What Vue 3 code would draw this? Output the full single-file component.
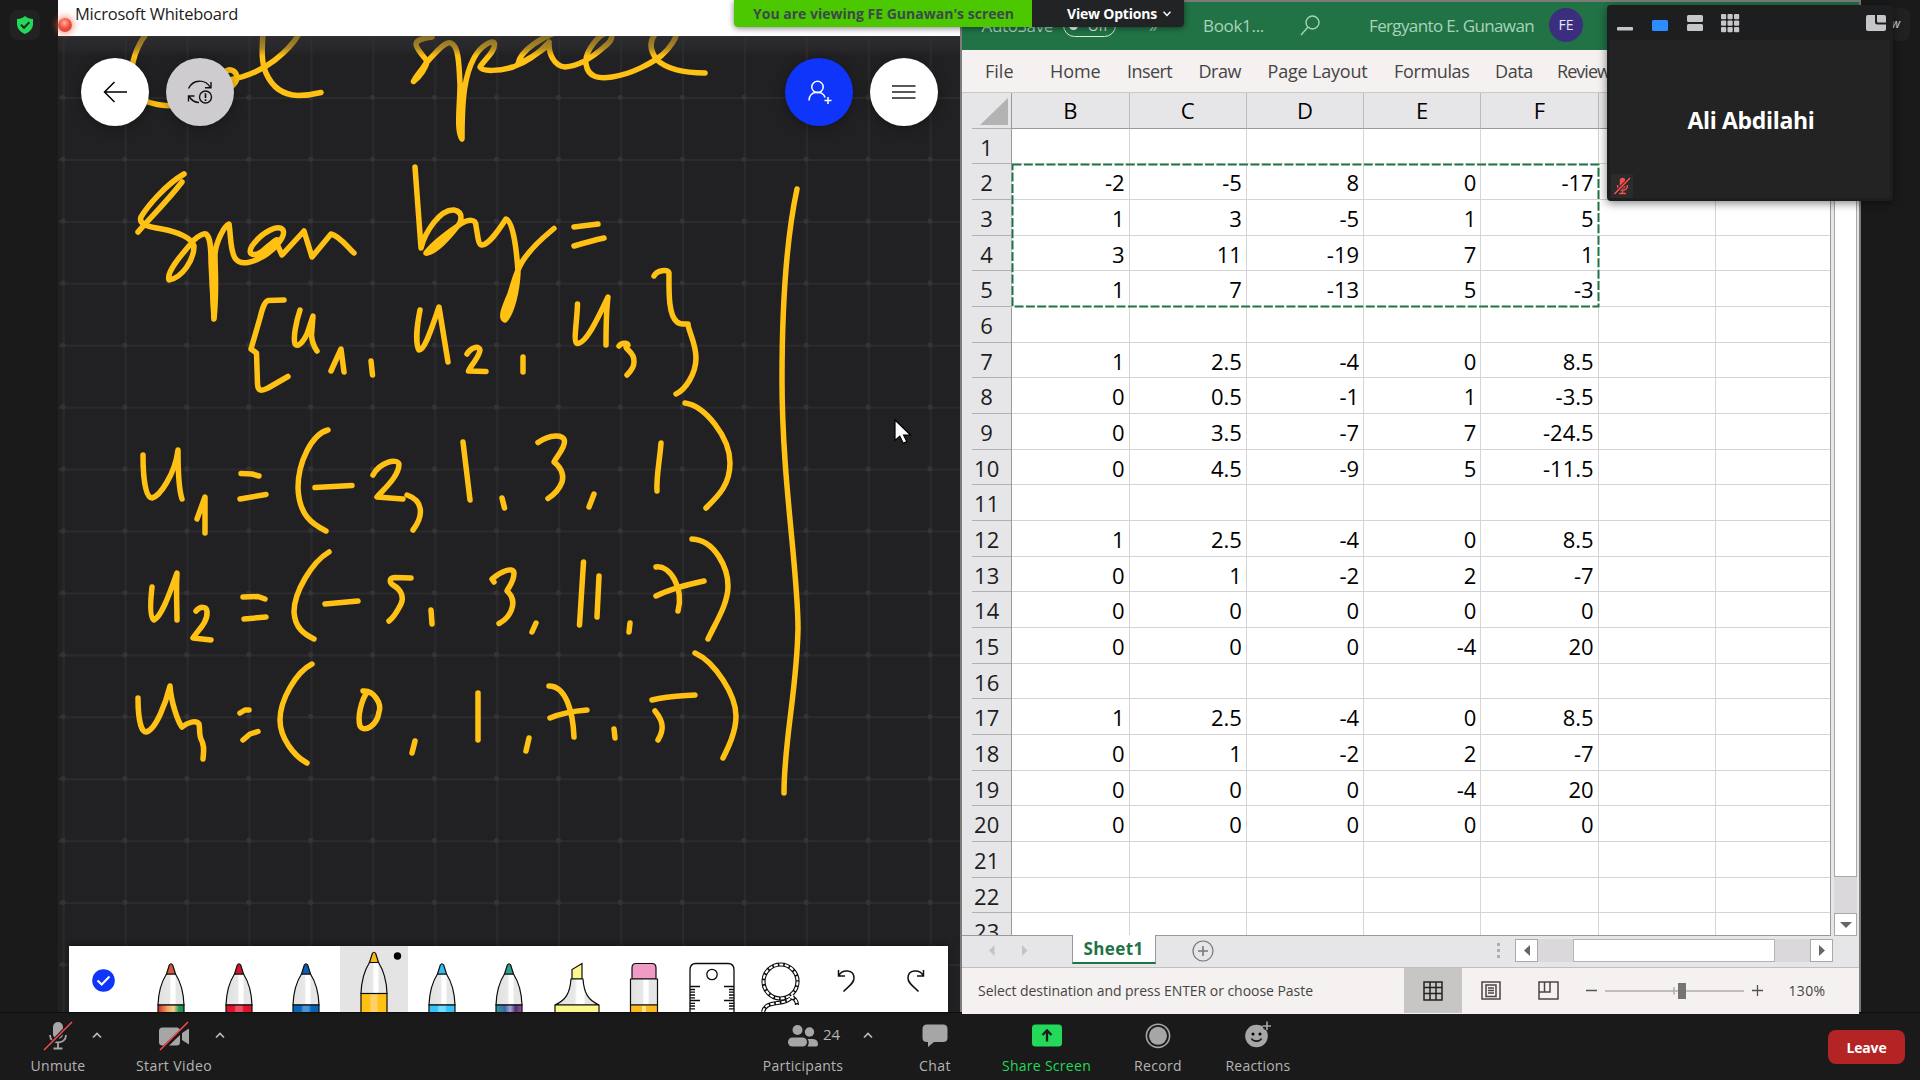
<script setup>
// Spreads the letters of a label so that its run has the given width in pixels.
const vFit = {
  mounted(el, { value }) {
    const width = el.getBoundingClientRect().width
    el.style.letterSpacing = (value - width) / el.textContent.trim().length + 'px'
  }
}

const menu = [
  ['File', 28.5], ['Home', 50.5], ['Insert', 45], ['Draw', 42.5],
  ['Page Layout', 100], ['Formulas', 75.5], ['Data', 38], ['Review', 53]
]
const columns = ['B', 'C', 'D', 'E', 'F', '', '']
const values = {
  2: [-2, -5, 8, 0, -17], 3: [1, 3, -5, 1, 5], 4: [3, 11, -19, 7, 1], 5: [1, 7, -13, 5, -3],
  7: [1, 2.5, -4, 0, 8.5], 8: [0, 0.5, -1, 1, -3.5], 9: [0, 3.5, -7, 7, -24.5], 10: [0, 4.5, -9, 5, -11.5],
  12: [1, 2.5, -4, 0, 8.5], 13: [0, 1, -2, 2, -7], 14: [0, 0, 0, 0, 0], 15: [0, 0, 0, -4, 20],
  17: [1, 2.5, -4, 0, 8.5], 18: [0, 1, -2, 2, -7], 19: [0, 0, 0, -4, 20], 20: [0, 0, 0, 0, 0]
}
const rows = Array.from({ length: 23 }, (_, i) => ({ n: i + 1, cells: columns.map((_, c) => values[i + 1]?.[c] ?? '') }))

const pens = [
  { id: 'p1', tip: '#cf5b3c', body: 'url(#rainbow)' },
  { id: 'p2', tip: '#d4142f', body: 'url(#redBody)' },
  { id: 'p3', tip: '#0f5db0', body: 'url(#blueBody)' },
  { id: 'p4', tip: '#f8b81c', body: 'url(#amberBody)', selected: true },
  { id: 'p5', tip: '#35bdf3', body: 'url(#skyBody)' },
  { id: 'p6', tip: '#2f9c8c', body: 'url(#galaxy)' }
]

const ink = [
  // heading, cut by the window title
  'M146 34C134 50 128 72 133 90C142 106 170 108 190 104C214 99 237 88 237 77C236 70 229 68 225 72',
  'M229 80C246 77 262 70 275 60C285 52 295 42 300 32',
  'M263 32C262 50 261 62 266 73C273 89 284 95 298 95.5C308 95.5 315 94 321 92.5',
  'M432 37C422 38 416 41 416 44C416 49 423 55 427 61C424 68 417 74 413.5 81.5C421 76 426 67 427 62C436 52 445 41 451 43C458 46 459 60 460 85C460 105 456 130 462 139C462 95 465 75 474 58C480 46 494 38 494.500 44C495 52 484 60 480 67C482 72 500 71 513 67C528 62 540 52 549 42',
  'M558 32C544 36 520 50 518 64C532 58 548 46 549 44C549 54 554 66 565 67C580 66 595 55 604 47C612 41 614 35 609 33C600 32 584 52 586 64C588 78 600 79 612 77C632 74 652 63 662 55C671 47 676 38 677 33',
  'M656 33C648 42 651 52 657 60C668 70 688 73 705 73',
  // Span
  'M184 174C165 185 147 207 141 217C138 225 150 227 162 229C178 232 192 238 194 246C194 260 182 278 169 280C166 272 182 254 194 240C198 236 204 233 206 234C211 238 211 250 211 262L214 319C217 290 215 270 215 254C216 242 224 226 229 224C231 236 230 250 235 258C240 266 252 263 262 257C275 250 286 236 283 230C278 224 262 232 252 246C246 256 256 258 266 248C272 243 280 236 276 242L282 255L304 231L312 257L331 234C340 236 348 248 354 253',
  'M182 182C165 204 146 222 138 232',
  'M214 262L212.500 285L214 317',
  // by =
  'M415 167L421 248C425 232 440 209 454 210C464 212 462 222 456 228C448 238 434 253 426 253C436 240 452 230 462 223C468 220 476 218 476 226C478 236 478 245 482 245C490 244 500 228 506 219C514 222 517 256 518 272C517 292 512 312 505 320C500 318 504 308 510 294C514 282 516 272 522 262C532 246 545 236 554 228.500',
  'M427 253L450 234', 'M505 317L514 288',
  'M574 227L598 224', 'M574 246C584 243 595 240 604 238',
  // [u1, u2, u3}
  'M284 300L268 300.500C264 302 262 310 260 318L251 349L256.500 353L257.500 384C258 392 262 391 268 388L288 376.500',
  'M300 310C296 322 293 338 295 344C298 348 303 342 307 334L313 316L311.500 335C312 344 315 348 317 351',
  'M331 371L341 349L344 372', 'M371 361L372.500 375',
  'M420 310C416 330 416 345 419 350C425 350 432 327 439 307L448 362',
  'M467 354C472 346 480 346 480 350C479 358 470 366 468.500 371L486 371.500', 'M523 357L523 372',
  'M577.500 304C577 322 573 342 577 343.500C586 344 598 318 608 297C606 312 606 330 606 345',
  'M619 346C621 343 627 342 628 345C621 349 635 350 634 362C634 368 630 372 627 375',
  'M654 276C657 270 668 269 669 273C669 290 668 315 677 322C681 325 685 324 688 324C688 330 696 343 696 358C696 374 685 390 676 394',
  // u1 = (-2, 1, 3, 1)
  'M143 455C143 475 145 498 152 498C160 496 175 474 178 450C178 470 179 490 182 499',
  'M197 519L205 497L205 533', 'M241 473.500L252 474L259 476', 'M240 499L266 494.500',
  'M328 430C312 434 298 462 298 488C299 515 312 524 326 531', 'M315 487.500L352 485.500',
  'M373 475C380 462 397 458 399 464C399 476 385 488 377 497L403 499',
  'M407 495C422 500 425 514 413 530', 'M463 442L470 500', 'M502 498L504.500 508',
  'M538 442.500C550 434 564 434 564.500 441C565 448 557 456 554 462C562 468 564 476 562 482C559 490 552 496 548 498.500',
  'M594 494L589 507', 'M661 443C660 458 656 478 657 491', 'M685 403C705 406 730 437 730 463C730 485 718 496 706 508',
  // u2 = (-5, 3, 11, 7)
  'M152 587C150 605 150 618 154 620C162 616 170 592 177 573C176 590 177 608 177 620',
  'M196 611C200 606 207 606 207 612C208 622 198 630 193 638L211 640',
  'M243 597L258 596.500L265 599', 'M244 619L266 617',
  'M329 552C312 562 294 592 294 612C295 628 304 634 314 639', 'M325 604L358 601',
  'M411 578L395 577.500C388 578 390 583 393 585C402 590 404 598 401 604C397 612 393 618 389 621', 'M431 610L432 624',
  'M494 582L492 579C500 572 513 566 514 573C514 582 508 588 507 591C514 597 514 604 511 611C508 618 504 621 499 623.500',
  'M536 623L532 632', 'M583.500 562L579.500 625', 'M599 576L597 617', 'M630 623L629 632',
  'M656 567C670 565 684 588 678 611', 'M656 596C670 589 690 584 704 581', 'M692 539C715 540 728 568 728 586C728 604 716 622 708 639',
  // u3 = (0, 1, 7, 5)
  'M138 698C138 718 141 732 146 732C156 730 166 702 170 686C171 702 178 722 182 727C188 722 196 720 199 724C200 728 199 735 201 739C205 746 203.500 752 203 759',
  'M240 713L245 710L249 710', 'M243 740L250 734L258 731.500',
  'M312 664C296 672 280 700 280 720C280 738 294 756 307 763',
  'M363 691C374 690 382 704 379 712C377 726 364 733 360 726C357 716 362 700 366 694',
  'M415 741L412 753', 'M478 693L478 740', 'M529 738L526 751',
  'M549 686C566 686 573 712 574 737', 'M550 718C562 713 574 711 587 710', 'M614 729L615 738',
  'M652 700C668 696 682 696 695 695', 'M655 711C664 722 664 730 658 740',
  'M695 653C715 662 736 695 736 716C736 732 728 748 723 758',
  // divider
  'M797 189C784 250 782 320 782 380C782 480 798 570 798 628C797 690 784 740 784 793'
]
</script>

<template>
  <div class="screen">
    <main class="stage">
      <aside class="rail">
        <div class="chip">
          <svg width="16" height="18" viewBox="0 0 16 18"><path d="M8 0C10 2 13 3 16 3V8C16 13 12 16.500 8 18C4 16.500 0 13 0 8V3C3 3 6 2 8 0Z" fill="#23d959" /><path d="M4 8.800L7 11.800L12.300 6.300" fill="none" stroke="#1d2b20" stroke-width="2" /></svg>
        </div>
      </aside>

      <section class="board">
        <header class="board-title"><span v-fit="163">Microsoft Whiteboard</span></header>
        <div class="canvas">
          <svg class="ink" viewBox="58 36 902 976">
            <defs>
              <pattern id="cells" x="62.700" y="35.100" width="61.930" height="61.930" patternUnits="userSpaceOnUse">
                <path d="M1 0V62M0 1H62" stroke="#2b2a2d" stroke-width="1.800" fill="none" />
              </pattern>
              <linearGradient id="shade" x1="0" x2="0" y1="0" y2="1"><stop offset="0" stop-color="#333236" stop-opacity=".6" /><stop offset=".6" stop-color="#333236" stop-opacity=".4" /><stop offset="1" stop-color="#333236" stop-opacity="0" /></linearGradient>
            </defs>
            <rect x="58" y="36" width="902" height="976" fill="url(#cells)" />
            <g fill="#343337"><template v-for="i in 15" :key="i"><circle v-for="j in 15" :key="j" :cx="63 + (i - 1) * 61.93" :cy="97.3 + (j - 1) * 61.93" r="2.600" /></template></g>
            <g fill="none" stroke="#ffc114" stroke-width="5.500" stroke-linecap="round" stroke-linejoin="round">
              <path v-for="(d, i) in ink" :key="i" :d="d" />
            </g>
            <rect x="58" y="36" width="902" height="20" fill="url(#shade)" />
            <path d="M895 420V440.500L899.800 436.300L903.200 443.300L906.800 441.600L903.600 435H910.500Z" fill="#fff" stroke="#000" stroke-width="1.200" />
          </svg>
          <nav class="board-actions">
            <button class="round"><svg width="24" height="22" viewBox="0 0 24 22"><path d="M24 11H2M11.500 1L1.500 11L11.500 21" fill="none" stroke="#000" stroke-width="1.500" /></svg></button>
            <button class="round grey">
              <svg width="26" height="26" viewBox="0 0 26 26" fill="none" stroke="#111" stroke-width="1.400"><path d="M1.500 9.500C6 0 18 0 23 8M24 3V8.700H18M1.500 22.500V17H7.500M2 17.500C5 22 8 23.500 12 23.500" /><circle cx="18.500" cy="18" r="6" /><path d="M18.500 14.300V19M18.500 20.300V22" stroke-width="1.700" /></svg>
            </button>
            <span class="spring"></span>
            <button class="round blue">
              <svg width="26" height="26" viewBox="0 0 26 26" fill="none" stroke="#fff" stroke-width="1.500"><circle cx="11.500" cy="8" r="5.700" /><path d="M3 21.500C3 11 17.500 11 19 18.500M22 18V25M18.500 21.500H25.500" /></svg>
            </button>
            <button class="round"><svg width="24" height="16" viewBox="0 0 24 16"><path d="M0 2H23.500M0 8H23.500M0 14H23.500" stroke="#222" stroke-width="1.500" /></svg></button>
          </nav>
          <div class="tools">
            <div class="tool done"><svg width="23" height="23" viewBox="0 0 23 23"><circle cx="11.500" cy="11.500" r="11.300" fill="#0f35fb" /><path d="M5.500 11.500L9.700 15.500L17.500 7.500" fill="none" stroke="#fff" stroke-width="2" /></svg></div>
            <div v-for="p in pens" :key="p.id" class="tool" :class="{ selected: p.selected }">
              <svg width="67.600" height="66" viewBox="0 0 67.600 66">
                <defs>
                  <linearGradient id="barrel"><stop offset=".1" stop-color="#e2e2e3" /><stop offset=".45" stop-color="#e8e8e9" /><stop offset=".5" stop-color="#fff" /><stop offset=".65" stop-color="#fff" /><stop offset=".7" stop-color="#e6e6e7" /></linearGradient>
                  <linearGradient id="rainbow"><stop offset="0" stop-color="#c92c2c" /><stop offset=".35" stop-color="#f0a060" /><stop offset=".6" stop-color="#f5d08a" /><stop offset=".8" stop-color="#2a9a58" /><stop offset="1" stop-color="#0f8f66" /></linearGradient>
                  <linearGradient id="redBody"><stop offset=".3" stop-color="#e0122e" /><stop offset=".4" stop-color="#ea5060" /><stop offset=".6" stop-color="#ea5060" /><stop offset=".7" stop-color="#e0122e" /></linearGradient>
                  <linearGradient id="blueBody"><stop offset=".3" stop-color="#0765b8" /><stop offset=".4" stop-color="#4a93d4" /><stop offset=".6" stop-color="#4a93d4" /><stop offset=".7" stop-color="#0765b8" /></linearGradient>
                  <linearGradient id="amberBody"><stop offset=".34" stop-color="#ffc114" /><stop offset=".38" stop-color="#ffd068" /><stop offset=".62" stop-color="#ffd068" /><stop offset=".66" stop-color="#ffc114" /></linearGradient>
                  <linearGradient id="skyBody"><stop offset=".3" stop-color="#33c5fa" /><stop offset=".4" stop-color="#76dbfd" /><stop offset=".6" stop-color="#76dbfd" /><stop offset=".7" stop-color="#33c5fa" /></linearGradient>
                  <linearGradient id="galaxy"><stop offset="0" stop-color="#2a9d9c" /><stop offset=".35" stop-color="#3d6aa5" /><stop offset=".55" stop-color="#a9a4d8" /><stop offset=".75" stop-color="#4b3170" /><stop offset="1" stop-color="#a04a9c" /></linearGradient>
                </defs>
                <g :transform="p.selected ? 'translate(0 -11.500)' : null" stroke="#0c0c0c" stroke-width="1.200">
                  <path d="M29.500 28H38.500C43 35 46.500 44 47 59H21C21.500 44 25 35 29.500 28Z" fill="url(#barrel)" />
                  <path d="M29.500 28L32.300 19Q34 16.500 35.700 19L38.500 28Z" :fill="p.tip" />
                  <rect x="21" y="59" width="26" height="24" :fill="p.body" />
                </g>
                <circle v-if="p.selected" cx="57.500" cy="10" r="3.700" />
              </svg>
            </div>
            <div class="tool">
              <svg width="67.600" height="66" viewBox="0 0 67.600 66" stroke="#0c0c0c" stroke-width="1.200"><path d="M29 33V23.500L39 17.500V33Z" fill="#fbf98e" /><path d="M28 33H40C41 47 45 54 56 59H12C23 54 27 47 28 33Z" fill="url(#barrel)" /><path d="M12 59H56V70H12Z" fill="#fbf98e" /></svg>
            </div>
            <div class="tool">
              <svg width="67.600" height="66" viewBox="0 0 67.600 66" stroke="#0c0c0c" stroke-width="1.200"><path d="M22 33V22Q22 17.500 26 17.500H42Q46 17.500 46 22V33Z" fill="#f09bc4" /><path d="M20.500 33H47.500V59H20.500Z" fill="url(#barrel)" /><path d="M20.500 59H47.500V70H20.500Z" fill="#fbb91e" /><path d="M32 60H36V66H32Z" fill="#fde98a" stroke="none" /></svg>
            </div>
            <div class="tool">
              <svg width="67.600" height="66" viewBox="0 0 67.600 66" fill="#fff" stroke="#0c0c0c" stroke-width="1.300"><path d="M12 70V24Q12 17.500 18 17.500H50Q56 17.500 56 24V70Z" /><circle cx="34" cy="28.500" r="5.200" /><path d="M12 40.500H22M12 43.500H17M12 46.200H17M12 49H17M12 51.800H17M12 54.500H22M12 57.300H17M12 60H17M12 62.800H17M56 40.500H46M56 43.500H51M56 46.200H51M56 49H51M56 51.800H51M56 54.500H46M56 57.300H51M56 60H51M56 62.800H51" /></svg>
            </div>
            <div class="tool">
              <svg width="67.600" height="66" viewBox="0 0 67.600 66" fill="none"><g stroke="#0c0c0c" stroke-width="4.200"><circle cx="34.500" cy="35.500" r="17" /><path d="M44 51C49 52 51 55 51 59M17 66C20 52 40 62 47 49" /></g><g stroke="#fff" stroke-width="2" stroke-dasharray="4 1.600"><circle cx="34.500" cy="35.500" r="17" /><path d="M44 51C49 52 51 55 51 59M17 66C20 52 40 62 47 49" /></g></svg>
            </div>
            <div class="tool arrow"><svg width="20" height="23" viewBox="0 0 20 23"><path d="M1.500 1V7H8M2 6.500C5 0 17 0 17 9C17 14 13 16 6.500 22.500" fill="none" stroke="#111" stroke-width="1.500" /></svg></div>
            <div class="tool arrow"><svg class="flip" width="20" height="23" viewBox="0 0 20 23"><path d="M1.500 1V7H8M2 6.500C5 0 17 0 17 9C17 14 13 16 6.500 22.500" fill="none" stroke="#111" stroke-width="1.500" /></svg></div>
          </div>
        </div>
      </section>

      <section class="excel">
        <header class="xl-title">
          <span class="autosave" v-fit="71.500">AutoSave</span>
          <span class="toggle"><i></i><b>Off</b></span>
          <span class="more">»</span>
          <span class="book" v-fit="61">Book1...</span>
          <svg width="20" height="21" viewBox="0 0 20 21" fill="none" stroke="#a8d3ba" stroke-width="1.400"><circle cx="12.500" cy="7.500" r="6.500" /><path d="M8 12L1 20" /></svg>
          <span class="user" v-fit="165">Fergyanto E. Gunawan</span>
          <span class="avatar">FE</span>
        </header>
        <nav class="xl-menu"><span v-for="m in menu" :key="m[0]" v-fit="m[1]">{{ m[0] }}</span></nav>
        <div class="xl-body">
          <div class="sheet">
            <div class="row head">
              <div class="num corner"><svg width="29" height="28" viewBox="0 0 29 28"><path d="M28 0V27H0Z" fill="#b3b3b3" /></svg></div>
              <div v-for="(c, i) in columns" :key="i" class="cell">{{ c }}</div>
            </div>
            <div v-for="r in rows" :key="r.n" class="row">
              <div class="num">{{ r.n }}</div>
              <div v-for="(v, i) in r.cells" :key="i" class="cell">{{ v }}</div>
            </div>
            <svg class="marquee" width="590" height="146" viewBox="0 0 590 146"><rect x="1.500" y="1.500" width="586" height="142" fill="none" stroke="#fff" stroke-width="2" /><rect x="1.500" y="1.500" width="586" height="142" fill="none" stroke="#217346" stroke-width="2" stroke-dasharray="9 2.330" /></svg>
          </div>
          <div class="vscroll">
            <div class="vthumb"></div>
            <div class="vtrack"></div>
            <div class="sbtn"><svg width="12" height="6"><path d="M0 0H12L6 6Z" fill="#666" /></svg></div>
          </div>
        </div>
        <div class="xl-tabs">
          <svg class="steps" width="39" height="12" viewBox="0 0 39 12" fill="#c4c4c6"><path d="M5.500 0V11L0 5.500ZM33 0V11L38.500 5.500Z" /></svg>
          <div class="tab"><span v-fit="60">Sheet1</span></div>
          <svg class="add" width="22" height="22" viewBox="0 0 22 22" fill="none" stroke="#777"><circle cx="11" cy="11" r="10" stroke-width="1.200" /><path d="M6 11H16M11 6V16" stroke-width="1.600" /></svg>
          <span class="spring"></span>
          <svg class="dots" width="3" height="16" fill="#adadad"><path d="M0 0H3V3H0ZM0 6H3V9H0ZM0 12H3V15H0Z" /></svg>
          <div class="hscroll">
            <div class="sbtn"><svg width="6" height="11"><path d="M6 0V11L0 5.500Z" fill="#666" /></svg></div>
            <div class="htrack"><div class="hthumb"></div></div>
            <div class="sbtn"><svg width="6" height="11"><path d="M0 0V11L6 5.500Z" fill="#666" /></svg></div>
          </div>
        </div>
        <footer class="xl-status">
          <span class="msg" v-fit="335">Select destination and press ENTER or choose Paste</span>
          <span class="spring"></span>
          <div class="view on"><svg width="20" height="20" viewBox="0 0 20 20"><path d="M1 1H19V19H1ZM1 6.500H19M1 12.500H19M7 1V19M13 1V19" fill="none" stroke="#222" stroke-width="1.500" /></svg></div>
          <div class="view"><svg width="20" height="19" viewBox="0 0 20 19" fill="none" stroke="#484644" stroke-width="1.500"><path d="M1 1H19V18H1ZM5 4H15V15.500H5ZM7 7H13M7 9.500H13M7 12H13" /></svg></div>
          <div class="view"><svg width="21" height="19" viewBox="0 0 21 19" fill="none" stroke="#484644" stroke-width="1.500"><path d="M1 1H20V18H1ZM1 11H12V1M6.500 1V11" /></svg></div>
          <svg class="slider" width="178" height="20" viewBox="0 0 178 20"><path d="M1 9.500H12M167 9.500H178M172.500 4V15" stroke="#555" stroke-width="1.300" /><path d="M20 10H159M89 6V13.500" stroke="#b0aeac" stroke-width="1.500" /><rect x="93" y="2" width="8" height="16" fill="#767472" /></svg>
          <span class="pct" v-fit="37">130%</span>
        </footer>
      </section>

      <div class="record-dot"></div>
      <div class="banner">
        <div class="viewing"><span v-fit="261">You are viewing FE Gunawan's screen</span></div>
        <div class="options"><span v-fit="90">View Options</span><svg width="8" height="6"><path d="M.5 .8L4 4.500L7.500 .8" fill="none" stroke="#fff" stroke-width="1.500" /></svg></div>
      </div>
      <div class="view-chip">w</div>
      <div class="thumb">
        <svg class="thumb-bar" width="285" height="35" viewBox="0 0 285 35" fill="#c6c6c8">
          <rect x="10" y="22" width="16" height="3.500" rx="1" /><rect x="45" y="15" width="16" height="11" rx="1.500" fill="#2d8cff" />
          <rect x="80" y="10" width="16" height="7" rx="1.500" /><rect x="80" y="19" width="16" height="7" rx="1.500" />
          <template v-for="r in 3" :key="r"><rect v-for="c in 3" :key="c" :x="107.500 + c * 6.500" :y="2.500 + r * 6.500" width="5.200" height="5.200" rx="1" /></template>
          <path d="M260 10H268V17Q268 19.500 270.500 19.500H279V24Q279 26 277 26H261Q259 26 259 24V12Q259 10 261 10ZM270 10H277Q279 10 279 12V17.500H271Q270 17.500 270 16Z" />
        </svg>
        <div class="tile"><span v-fit="127">Ali Abdilahi</span>
          <div class="muted"><svg width="17" height="18" viewBox="0 0 17 18" fill="none" stroke="#f5504e"><path d="M8.500 3.500V9" stroke-width="5.500" stroke-linecap="round" /><path d="M3.500 8C3.500 15 13.500 15 13.500 8M8.500 13V16M5 16.500H12" stroke-width="1.500" /><path d="M.5 17L16 1" stroke="#2b2526" stroke-width="3.500" /><path d="M.5 17L16 1" stroke-width="1.600" /></svg></div>
        </div>
      </div>
    </main>

    <footer class="zoombar">
      <div class="item unmute">
        <svg class="icon" width="30" height="30" viewBox="0 0 30 30" fill="none" stroke="#a6a6a6"><path d="M15 6V13" stroke-width="10" stroke-linecap="round" /><path d="M7 14C7 24 23 24 23 14M15 21V27M10.500 27.500H19.500" stroke-width="1.800" /><path d="M2 29L29 1" stroke="#1a1a1a" stroke-width="4" /><path d="M1 29L29 1" stroke="#ff4b4b" stroke-width="1.500" /></svg>
        <label v-fit="55">Unmute</label>
      </div>
      <svg class="caret c1" width="10" height="7"><path d="M1 5.500L5 1.500L9 5.500" fill="none" stroke="#bbb" stroke-width="1.700" /></svg>
      <div class="item video">
        <svg class="icon" width="30" height="30" viewBox="0 0 30 30"><rect x="0" y="6.500" width="21" height="18" rx="3.500" fill="#a6a6a6" /><path d="M23 12L30 7.500V23.500L23 19Z" fill="#a6a6a6" /><path d="M1 30.500L30 2.500" stroke="#1a1a1a" stroke-width="4" /><path d="M1 29L29 1" stroke="#ff4b4b" stroke-width="1.500" /></svg>
        <label v-fit="76">Start Video</label>
      </div>
      <svg class="caret c2" width="10" height="7"><path d="M1 5.500L5 1.500L9 5.500" fill="none" stroke="#bbb" stroke-width="1.700" /></svg>
      <div class="item people">
        <svg class="icon" width="30" height="30" viewBox="0 0 30 30" fill="#a6a6a6"><circle cx="9.500" cy="9" r="5" /><circle cx="21.500" cy="11" r="4.700" /><rect x="0" y="16.500" width="19" height="9" rx="4.500" /><path d="M19.500 18H25Q30 18.500 30 23Q30 25.500 28 25.500H19.500Q22 21 19.500 18Z" /></svg>
        <label v-fit="80.500">Participants</label>
        <span class="count">24</span>
      </div>
      <svg class="caret c3" width="10" height="7"><path d="M1 5.500L5 1.500L9 5.500" fill="none" stroke="#bbb" stroke-width="1.700" /></svg>
      <div class="item chat">
        <svg class="icon" width="26" height="30" viewBox="0 0 26 30" fill="#a6a6a6"><path d="M5 3.500H21Q25.500 3.500 25.500 8V17Q25.500 21 21 21H12L6 26V21H5Q.5 21 .5 17V8Q.5 3.500 5 3.500Z" /></svg>
        <label v-fit="32">Chat</label>
      </div>
      <div class="item share">
        <svg class="icon" width="30" height="30" viewBox="0 0 30 30"><rect x="0" y="3.500" width="30" height="22" rx="3.500" fill="#23d959" /><path d="M15 20.500V10M10.500 14L15 9.500L19.500 14" fill="none" stroke="#1a1a1a" stroke-width="2.300" /></svg>
        <label v-fit="89">Share Screen</label>
      </div>
      <div class="item rec">
        <svg class="icon" width="26" height="30" viewBox="0 0 26 30"><circle cx="13" cy="14.800" r="11.600" fill="none" stroke="#a6a6a6" stroke-width="1.600" /><circle cx="13" cy="14.800" r="9" fill="#a6a6a6" /></svg>
        <label v-fit="48">Record</label>
      </div>
      <div class="item react">
        <svg class="icon" width="26" height="30" viewBox="0 0 26 30"><circle cx="11.500" cy="15" r="11.300" fill="#a6a6a6" /><path d="M22 1V9M18 5H26" stroke="#1a1a1a" stroke-width="5" /><path d="M22 .5V9M17.500 5H26.500" stroke="#a6a6a6" stroke-width="1.600" /><circle cx="8" cy="13" r="1.500" /><circle cx="15" cy="13" r="1.500" /><path d="M6.500 17.500C8 21 15 21 16.500 17.500" fill="none" stroke="#1a1a1a" stroke-width="1.700" /></svg>
        <label v-fit="65">Reactions</label>
      </div>
      <span class="spring"></span>
      <button class="leave"><span v-fit="40">Leave</span></button>
    </footer>
  </div>
</template>

<style>
body { margin: 0; background: #1a1a1a; overflow: hidden; }
</style>

<style scoped>
.screen { width: 1920px; height: 1080px; display: flex; flex-direction: column; background: #1a1a1a; font-family: "Open Sans", "Noto Sans", sans-serif; overflow: hidden; }
.screen *, .screen *::before { box-sizing: border-box; }
svg { display: block; flex: none; }
span { white-space: nowrap; }
button { border: 0; padding: 0; font: inherit; }
.spring { flex: 1; }
.stage { position: relative; height: 1012px; display: flex; flex: none; }
.rail { width: 58px; padding: 10px; }
.chip { width: 30px; height: 30px; border-radius: 8px; background: #222; display: flex; align-items: center; justify-content: center; }

.board { width: 902px; height: 1012px; }
.board-title { height: 36px; background: #fff; padding-left: 17px; font: 16.500px/28px "Open Sans", sans-serif; color: #1c1c1c; }
.board-title span { display: inline-block; }
.canvas { position: relative; height: 976px; background: #212023; display: flex; flex-direction: column; justify-content: space-between; }
.ink { position: absolute; inset: 0; width: 902px; height: 976px; }
.board-actions { position: relative; display: flex; gap: 17px; padding: 22px 22.500px 0 22.500px; }
.round { width: 68px; height: 68px; border-radius: 50%; background: #fff; display: flex; align-items: center; justify-content: center; box-shadow: 0 2px 12px rgba(0, 0, 0, .35); }
.grey { background: #cfccd0; }
.blue { background: #0f35fb; }
.tools { position: relative; display: flex; width: 879px; height: 66px; margin-left: 11px; padding-left: .7px; background: #fff; overflow: hidden; box-shadow: 0 -2px 6px rgba(0, 0, 0, .3); }
.tool { width: 67.600px; flex: none; display: flex; justify-content: center; }
.selected { background: #e5e4e4; }
.done { padding-top: 23px; }
.arrow { padding-top: 23px; }
.flip { transform: scaleX(-1); }

.excel { width: 901px; height: 1012px; background: #e6e6e8; border: 2px solid #7c7c7c; border-bottom: 0; display: flex; flex-direction: column; }
.xl-title { height: 48px; flex: none; background: #217346; display: flex; align-items: center; font-size: 17px; color: #a8d3ba; padding: 0 0 2px 19.500px; }
.toggle { width: 53px; height: 23px; margin: 0 0 0 10px; border: 1.500px solid #d5eadd; border-radius: 12px; display: flex; align-items: center; justify-content: space-between; padding: 0 7px 0 5px; }
.toggle i { width: 9px; height: 9px; border-radius: 50%; background: #fff; }
.toggle b { font-weight: 400; font-size: 14px; color: #d5eadd; }
.more { width: 14px; margin-left: 33px; }
.book { margin-left: 40px; }
.xl-title svg { margin-left: 36px; }
.user { margin-left: 49px; }
.avatar { width: 34px; height: 34px; margin-left: 15px; border-radius: 50%; background: #3b2e7e; color: #e8e8f4; font-size: 14px; line-height: 34px; text-align: center; }
.xl-menu { height: 43px; flex: none; background: #f5f1f0; border-bottom: 1px solid #cbc9c8; display: flex; gap: 26.500px; padding-left: 23px; font-size: 18px; line-height: 43px; color: #444; }
.xl-menu span { flex: none; }
.xl-menu span:first-child { margin-right: 10px; }
.xl-menu span:nth-child(7) { margin-left: -1px; }
.xl-menu span:last-child { margin-left: -2.500px; }

.xl-body { height: 843px; flex: none; display: flex; overflow: hidden; }
.sheet { position: relative; width: 869px; height: 843px; flex: none; overflow: hidden; border-right: 1px solid #999; border-bottom: 1px solid #999; }
.row { display: flex; height: 35.670px; width: 1000px; font-size: 22px; line-height: 35px; color: #000; }
.num { width: 50.300px; flex: none; text-align: center; border-right: 1px solid #9a9a9c; background: linear-gradient(#b1b1b3, #b1b1b3) 10px 100% / 40px 1px no-repeat; padding-top: 1px; color: #1d1d1d; }
.cell { width: 117.270px; flex: none; text-align: right; padding: 1px 4px 0 0; background: #fff; border-right: 1px solid #d6d6d8; border-bottom: 1px solid #d4d4d6; }
.cell:last-child { width: 140px; }
.head { height: 35.800px; line-height: 35px; }
.head .cell { background: #e6e6e8; text-align: center; padding: 0; border-right-color: #bcbcbe; border-bottom-color: #999; }
.corner { padding: 5px 0 0 18px; }
.marquee { position: absolute; left: 49px; top: 69.500px; }
.vscroll { width: 26px; padding-left: 3px; display: flex; flex-direction: column; }
.vthumb { height: 784px; width: 23px; background: #fff; border: 1px solid #a9a9ab; }
.vtrack { flex: 1; width: 23px; background: #dad8db; }
.sbtn { width: 23px; height: 23px; flex: none; background: #fff; border: 1px solid #a9a9ab; display: flex; align-items: center; justify-content: center; }

.xl-tabs { height: 32px; flex: none; display: flex; border-bottom: 1px solid #c0bebe; padding: 0 26px 0 27px; }
.steps { margin-top: 9px; }
.tab { width: 84px; height: 29px; margin: -1px 0 0 44px; position: relative; background: #fff; border: 1px solid #999; border-top: 0; border-bottom: 2px solid #217346; font-weight: 700; font-size: 17px; line-height: 28px; color: #217346; padding-left: 10.500px; }
.tab span { display: inline-block; }
.add { margin: 4px 0 0 35.500px; }
.dots { margin: 7px 15px 0 0; }
.hscroll { display: flex; width: 318px; height: 23px; margin-top: 3px; }
.htrack { flex: 1; background: #dad8db; padding-left: 35px; }
.hthumb { width: 202px; height: 23px; background: #fff; border: 1px solid #b5b5b7; }
.xl-status { flex: 1; background: #f5f1f0; display: flex; align-items: center; font-size: 14px; color: #444; padding: 0 33.500px 1px 0; }
.msg { margin-left: 16px; }
.view { width: 58px; height: 45px; display: flex; align-items: center; justify-content: center; }
.on { background: #c8c6c4; }
.slider { margin: 0 26px 0 7px; }

.record-dot { position: absolute; left: 58px; top: 18px; width: 14px; height: 14px; border-radius: 50%; background: radial-gradient(circle at 45% 35%, #ffb0a5, #f0513f 45%, #c4382c); box-shadow: 0 0 6px 2px rgba(240, 100, 60, .6); }
.banner { position: absolute; left: 734px; top: 0; display: flex; height: 27px; font-size: 14px; line-height: 27px; font-weight: 700; box-shadow: 0 1px 6px rgba(0, 0, 0, .5); border-radius: 0 0 4px 4px; overflow: hidden; }
.viewing { width: 298px; background: #4cc800; color: #3b4a4a; padding-left: 19px; }
.viewing span { display: inline-block; }
.options { width: 152px; background: #222325; color: #fff; display: flex; align-items: center; padding-left: 35px; gap: 6px; }
.view-chip { position: absolute; left: 1870px; top: 8px; width: 40px; height: 33px; border-radius: 8px; background: #212121; color: #ddd; font-size: 12px; font-style: italic; line-height: 31px; text-align: right; padding-right: 10px; }
.thumb { position: absolute; left: 1607px; top: 5px; width: 286px; height: 196px; background: #1c1e20; border-radius: 4px; box-shadow: 0 2px 10px rgba(0, 0, 0, .5); overflow: hidden; }
.tile { position: relative; margin: 0 3px; height: 158px; background: #232323; display: flex; align-items: center; justify-content: center; color: #fff; font-size: 23px; font-weight: 700; padding: 1px 0 0 2px; }
.muted { position: absolute; left: 1px; bottom: 0; width: 22px; height: 24px; background: #2b2b2b; display: flex; align-items: center; justify-content: center; }

.zoombar { height: 68px; flex: none; display: flex; border-top: 1px solid #0c0c0c; color: #b4b4b4; font-size: 14px; }
.item { position: relative; flex: none; display: flex; flex-direction: column; align-items: center; padding-top: 8px; }
.item label { line-height: 20px; margin-top: 5px; white-space: nowrap; }
.unmute { width: 56px; margin-left: 30px; }
.video { width: 78px; margin-left: 33px; }
.people { width: 82px; margin-left: 537.500px; }
.chat { width: 34px; margin-left: 45px; }
.share { width: 90px; margin-left: 49.500px; color: #23d959; }
.rec { width: 49px; margin-left: 42px; }
.react { width: 66px; margin-left: 42.500px; }
.count { position: absolute; left: 61px; top: 11px; font-size: 15px; line-height: 20px; }
.caret { margin-top: 19px; }
.c1 { margin-left: 6px; }
.c2 { margin-left: 1.500px; }
.c3 { margin-left: 19px; }
.leave { width: 77px; height: 34px; margin: 17px 15px 0 0; border-radius: 8px; background: #b52424; color: #fff; font-size: 14px; font-weight: 700; }
.leave span { display: inline-block; }
</style>
